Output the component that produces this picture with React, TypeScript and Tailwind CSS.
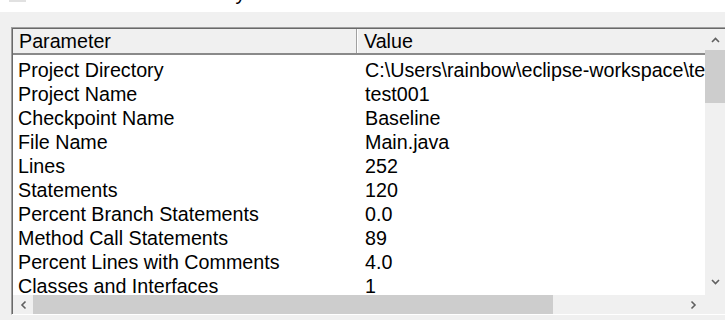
import React from 'react';

const rows: [string, string][] = [
    ['Project Directory', 'C:\\Users\\rainbow\\eclipse-workspace\\test001'],
    ['Project Name', 'test001'],
    ['Checkpoint Name', 'Baseline'],
    ['File Name', 'Main.java'],
    ['Lines', '252'],
    ['Statements', '120'],
    ['Percent Branch Statements', '0.0'],
    ['Method Call Statements', '89'],
    ['Percent Lines with Comments', '4.0'],
    ['Classes and Interfaces', '1'],
];

// small scrollbar chevron, rotated per direction
function Chevron({ dir }: { dir: 'up' | 'down' | 'left' | 'right' }) {
    const rot = { up: 'rotate-0', down: 'rotate-180', left: '-rotate-90', right: 'rotate-90' }[dir];
    return (
        <svg width="9" height="6" viewBox="0 0 9 6" className={rot}>
            <polyline points="1,5 4.5,1.5 8,5" fill="none" stroke="#606060" strokeWidth="1.6" />
        </svg>
    );
}

export default function App() {
    return (
        <div className="w-[725px] h-[320px] overflow-hidden bg-[#f0f0f0] text-black font-['Liberation_Sans',Arial,sans-serif]">
            {/* tail of the control above, mostly scrolled out */}
            <div className="h-[12px] bg-white overflow-hidden flex items-start">
                <div className="ml-[9px] w-[17px] h-[2px] bg-[#e1e1e1] shrink-0" />
                <div className="ml-[64px] -mt-[19px] text-[20px] leading-[24px] whitespace-nowrap">Metrics Summary</div>
            </div>

            <div className="mt-[15px] ml-[11px] border-t border-l border-[#a0a0a0] border-b border-b-white">
                <div className="border-t border-l border-[#696969]">
                    <div className="flex h-[266px]">
                        <div className="w-[692px] bg-white overflow-hidden">
                            <div className="flex h-[26px] bg-[#f0f0f0] border-b-2 border-[#8a8a8a] text-[19.7px] leading-[24px]">
                                <div className="w-[344px] border-r border-[#a0a0a0] pl-[6px]">Parameter</div>
                                <div className="flex-1 border-l border-white pl-[6px]">Value</div>
                            </div>
                            <div className="pt-[3px] text-[19.7px] leading-[24px]">
                                {rows.map(([name, value]) => (
                                    <div key={name} className="flex h-[24px] whitespace-nowrap">
                                        <div className="w-[344px] pl-[5px]">{name}</div>
                                        <div className="flex-1 pl-[8px] overflow-hidden">{value}</div>
                                    </div>
                                ))}
                            </div>
                        </div>
                        <div className="w-[20px] flex flex-col bg-[#f0f0f0]">
                            <div className="h-[21px] flex items-center justify-center">
                                <Chevron dir="up" />
                            </div>
                            <div className="h-[53px] bg-[#cdcdcd]" />
                            <div className="flex-1" />
                            <div className="h-[24px] flex items-center justify-center pb-[3px]">
                                <Chevron dir="down" />
                            </div>
                        </div>
                    </div>
                    <div className="flex h-[19px] bg-[#f0f0f0]">
                        <div className="w-[20px] flex items-center justify-center">
                            <Chevron dir="left" />
                        </div>
                        <div className="w-[520px] bg-[#cdcdcd]" />
                        <div className="flex-1" />
                        <div className="w-[20px] flex items-center justify-center pr-[3px]">
                            <Chevron dir="right" />
                        </div>
                        <div className="w-[20px]" />
                    </div>
                </div>
            </div>
        </div>
    );
}
